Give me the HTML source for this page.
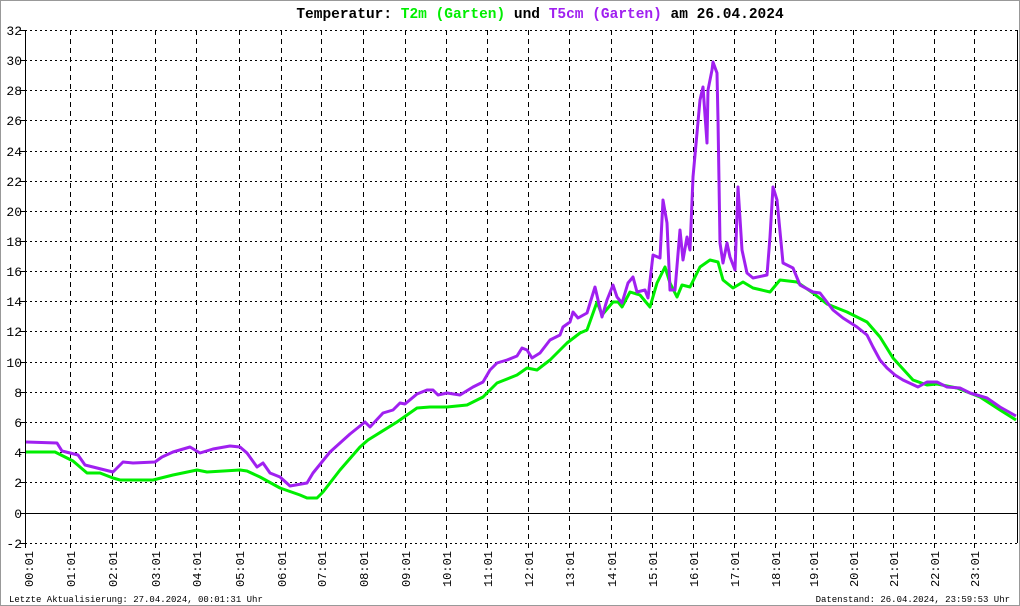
<!DOCTYPE html>
<html><head><meta charset="utf-8"><style>
html,body{margin:0;padding:0;background:#fff}
svg{display:block}
text{font-family:"Liberation Mono","DejaVu Sans Mono",monospace}
</style></head><body>
<svg width="1020" height="606" viewBox="0 0 1020 606" xmlns="http://www.w3.org/2000/svg">
<rect x="0.5" y="0.5" width="1019" height="605" fill="#fff" stroke="#999"/>
<g stroke="#000" stroke-width="1" stroke-dasharray="2,3" shape-rendering="crispEdges">
<line x1="25" y1="30.5" x2="1018" y2="30.5"/><line x1="25" y1="60.5" x2="1018" y2="60.5"/><line x1="25" y1="90.5" x2="1018" y2="90.5"/><line x1="25" y1="120.5" x2="1018" y2="120.5"/><line x1="25" y1="151.5" x2="1018" y2="151.5"/><line x1="25" y1="181.5" x2="1018" y2="181.5"/><line x1="25" y1="211.5" x2="1018" y2="211.5"/><line x1="25" y1="241.5" x2="1018" y2="241.5"/><line x1="25" y1="271.5" x2="1018" y2="271.5"/><line x1="25" y1="301.5" x2="1018" y2="301.5"/><line x1="25" y1="331.5" x2="1018" y2="331.5"/><line x1="25" y1="362.5" x2="1018" y2="362.5"/><line x1="25" y1="392.5" x2="1018" y2="392.5"/><line x1="25" y1="422.5" x2="1018" y2="422.5"/><line x1="25" y1="452.5" x2="1018" y2="452.5"/><line x1="25" y1="482.5" x2="1018" y2="482.5"/><line x1="25" y1="543.5" x2="1018" y2="543.5"/>
</g>
<g stroke="#000" stroke-width="1" stroke-dasharray="5,4" shape-rendering="crispEdges">
<line x1="70.5" y1="30" x2="70.5" y2="548"/><line x1="112.5" y1="30" x2="112.5" y2="548"/><line x1="155.5" y1="30" x2="155.5" y2="548"/><line x1="196.5" y1="30" x2="196.5" y2="548"/><line x1="239.5" y1="30" x2="239.5" y2="548"/><line x1="281.5" y1="30" x2="281.5" y2="548"/><line x1="321.5" y1="30" x2="321.5" y2="548"/><line x1="363.5" y1="30" x2="363.5" y2="548"/><line x1="405.5" y1="30" x2="405.5" y2="548"/><line x1="446.5" y1="30" x2="446.5" y2="548"/><line x1="487.5" y1="30" x2="487.5" y2="548"/><line x1="528.5" y1="30" x2="528.5" y2="548"/><line x1="569.5" y1="30" x2="569.5" y2="548"/><line x1="611.5" y1="30" x2="611.5" y2="548"/><line x1="652.5" y1="30" x2="652.5" y2="548"/><line x1="693.5" y1="30" x2="693.5" y2="548"/><line x1="734.5" y1="30" x2="734.5" y2="548"/><line x1="775.5" y1="30" x2="775.5" y2="548"/><line x1="813.5" y1="30" x2="813.5" y2="548"/><line x1="853.5" y1="30" x2="853.5" y2="548"/><line x1="893.5" y1="30" x2="893.5" y2="548"/><line x1="934.5" y1="30" x2="934.5" y2="548"/><line x1="974.5" y1="30" x2="974.5" y2="548"/>
</g>
<g stroke="#000" stroke-width="1" shape-rendering="crispEdges">
<line x1="25.5" y1="30" x2="25.5" y2="548"/>
<line x1="1017.5" y1="30" x2="1017.5" y2="543"/>
<line x1="20" y1="513.5" x2="1018" y2="513.5"/>
<line x1="20" y1="30.5" x2="25" y2="30.5"/><line x1="20" y1="60.5" x2="25" y2="60.5"/><line x1="20" y1="90.5" x2="25" y2="90.5"/><line x1="20" y1="120.5" x2="25" y2="120.5"/><line x1="20" y1="151.5" x2="25" y2="151.5"/><line x1="20" y1="181.5" x2="25" y2="181.5"/><line x1="20" y1="211.5" x2="25" y2="211.5"/><line x1="20" y1="241.5" x2="25" y2="241.5"/><line x1="20" y1="271.5" x2="25" y2="271.5"/><line x1="20" y1="301.5" x2="25" y2="301.5"/><line x1="20" y1="331.5" x2="25" y2="331.5"/><line x1="20" y1="362.5" x2="25" y2="362.5"/><line x1="20" y1="392.5" x2="25" y2="392.5"/><line x1="20" y1="422.5" x2="25" y2="422.5"/><line x1="20" y1="452.5" x2="25" y2="452.5"/><line x1="20" y1="482.5" x2="25" y2="482.5"/><line x1="20" y1="543.5" x2="25" y2="543.5"/>
</g>
<g font-size="13" text-anchor="end" fill="#000" font-family="Liberation Sans, sans-serif">
<text x="22" y="35">32</text><text x="22" y="65">30</text><text x="22" y="95">28</text><text x="22" y="125">26</text><text x="22" y="156">24</text><text x="22" y="186">22</text><text x="22" y="216">20</text><text x="22" y="246">18</text><text x="22" y="276">16</text><text x="22" y="306">14</text><text x="22" y="336">12</text><text x="22" y="367">10</text><text x="22" y="397">8</text><text x="22" y="427">6</text><text x="22" y="457">4</text><text x="22" y="487">2</text><text x="22" y="518">0</text><text x="22" y="548">-2</text>
</g>
<g font-size="12" fill="#000" text-anchor="end">
<text transform="translate(33,551) rotate(-90)">00:01</text><text transform="translate(75,551) rotate(-90)">01:01</text><text transform="translate(117,551) rotate(-90)">02:01</text><text transform="translate(160,551) rotate(-90)">03:01</text><text transform="translate(201,551) rotate(-90)">04:01</text><text transform="translate(244,551) rotate(-90)">05:01</text><text transform="translate(286,551) rotate(-90)">06:01</text><text transform="translate(326,551) rotate(-90)">07:01</text><text transform="translate(368,551) rotate(-90)">08:01</text><text transform="translate(410,551) rotate(-90)">09:01</text><text transform="translate(451,551) rotate(-90)">10:01</text><text transform="translate(492,551) rotate(-90)">11:01</text><text transform="translate(533,551) rotate(-90)">12:01</text><text transform="translate(574,551) rotate(-90)">13:01</text><text transform="translate(616,551) rotate(-90)">14:01</text><text transform="translate(657,551) rotate(-90)">15:01</text><text transform="translate(698,551) rotate(-90)">16:01</text><text transform="translate(739,551) rotate(-90)">17:01</text><text transform="translate(780,551) rotate(-90)">18:01</text><text transform="translate(818,551) rotate(-90)">19:01</text><text transform="translate(858,551) rotate(-90)">20:01</text><text transform="translate(898,551) rotate(-90)">21:01</text><text transform="translate(939,551) rotate(-90)">22:01</text><text transform="translate(979,551) rotate(-90)">23:01</text>
</g>
<polyline fill="none" stroke="#00ee00" stroke-width="3" stroke-linejoin="round" points="26,452 55,452 63,456 73,461 87,473 100,473 113,478 120,480 153,480 173,475 197,470 207,472 240,470 247,471 260,477 280,488 300,495 307,498 317,498 323,492 340,470 360,447 368,440 397,422 417,408 430,407 447,407 467,405 483,397 497,383 517,375 527,368 537,370 550,360 567,343 580,333 587,330 597,302 602,315 613,302 618,302 622,307 630,292 640,295 650,307 657,283 665,267 670,283 677,297 682,285 690,287 700,267 710,260 718,262 723,280 733,288 743,282 753,288 770,292 780,280 797,282 813,293 827,304 847,312 867,322 880,337 893,358 913,380 927,385 937,384 957,388 980,397 1000,410 1016,420"/>
<polyline fill="none" stroke="#a020f0" stroke-width="3" stroke-linejoin="round" points="26,442 57,443 62,451 70,453 78,455 85,465 97,468 113,472 123,462 133,463 155,462 162,457 173,452 190,447 200,453 213,449 230,446 240,447 247,453 257,467 263,463 270,473 280,477 290,486 307,483 313,473 330,452 350,434 365,422 370,427 383,413 393,410 400,403 405,404 417,394 427,390 433,390 438,395 447,393 460,395 473,387 483,382 490,370 497,363 507,360 517,356 522,348 527,350 532,358 540,353 550,340 560,335 563,327 570,322 573,312 578,318 587,313 595,287 602,317 607,300 613,285 617,297 622,303 628,283 633,277 637,292 645,290 648,298 653,255 660,258 663,200 667,223 670,290 675,290 680,230 683,260 687,237 690,250 693,177 700,100 703,87 707,143 708,90 712,70 713,62 717,73 718,120 720,243 723,263 727,243 730,257 735,270 738,187 742,250 747,273 753,278 767,275 770,237 773,187 777,200 783,263 793,268 800,285 813,292 820,293 833,310 843,318 857,327 867,335 873,347 880,360 887,368 895,375 903,380 918,387 927,382 937,382 947,387 960,388 970,393 987,398 1000,407 1016,416"/>
<text x="540" y="18" font-size="14.5" font-weight="bold" text-anchor="middle"><tspan fill="#000">Temperatur: </tspan><tspan fill="#00ee00">T2m (Garten)</tspan><tspan fill="#000"> und </tspan><tspan fill="#a020f0">T5cm (Garten)</tspan><tspan fill="#000"> am 26.04.2024</tspan></text>
<text x="9" y="602" font-size="9" fill="#000">Letzte Aktualisierung: 27.04.2024, 00:01:31 Uhr</text>
<text x="1010" y="602" font-size="9" fill="#000" text-anchor="end">Datenstand: 26.04.2024, 23:59:53 Uhr</text>
</svg>
</body></html>
